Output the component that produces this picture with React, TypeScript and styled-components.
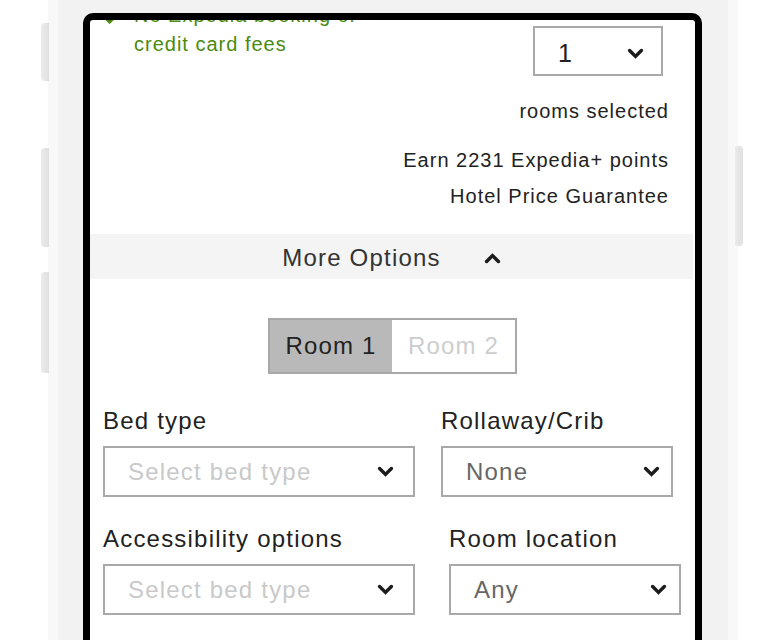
import React from "react";
import styled, { createGlobalStyle } from "styled-components";

const GlobalStyle = createGlobalStyle`
  html, body { margin: 0; padding: 0; background: #ffffff; }
  body { font-family: "Liberation Sans", Arial, Helvetica, sans-serif; }
  #root { height: 640px; overflow: hidden; }
`;

const Page = styled.div`
  height: 640px;
  padding-left: 48px;
  overflow: hidden;
`;

const PhoneBody = styled.div`
  position: relative;
  width: 690px;
  height: 640px;
  box-sizing: border-box;
  padding: 13px 36px 0 35px;
  background: linear-gradient(
    to right,
    #f8f8f8 0,
    #f8f8f8 10px,
    #f2f2f2 10px,
    #f2f2f2 calc(100% - 10px),
    #f8f8f8 calc(100% - 10px)
  );
`;

const SideButton = styled.div<{ $side: "left" | "right"; $top: number; $height: number }>`
  position: absolute;
  top: ${(p) => p.$top}px;
  ${(p) => (p.$side === "left" ? "left: -7px;" : "right: -5px;")}
  width: 8px;
  height: ${(p) => p.$height}px;
  border-radius: ${(p) => (p.$side === "left" ? "4px 0 0 4px" : "0 4px 4px 0")};
  background: linear-gradient(to right, #ebebeb, #e0e0e0);
`;

const Screen = styled.div`
  border: 7px solid #000;
  border-bottom: none;
  border-radius: 10px 10px 0 0;
  background: #fff;
  height: 700px;
  overflow: hidden;
`;

const ScreenContent = styled.div`
  margin-top: -20px;
  color: #222;
`;

const Summary = styled.div`
  display: flex;
  justify-content: space-between;
  align-items: flex-start;
`;

const Benefits = styled.ul`
  list-style: none;
  margin: 1px 0 0;
  padding: 0 0 0 14px;
`;

const Benefit = styled.li`
  display: flex;
  align-items: flex-start;
  gap: 14px;
  color: #4c8a0f;
  font-size: 20px;
  letter-spacing: 1px;
  line-height: 29px;
`;

const BenefitText = styled.span`
  max-width: 250px;
`;

const CheckSvg = styled.svg`
  width: 16px;
  height: 12px;
  margin-top: 11px;
  flex-shrink: 0;
`;

const Booking = styled.div`
  display: flex;
  flex-direction: column;
  align-items: flex-end;
  padding: 26px 26px 20px 0;
`;

const SmallText = styled.div<{ $top?: number }>`
  font-size: 20px;
  letter-spacing: 1px;
  line-height: 36px;
  color: #222;
  margin-top: ${(p) => p.$top ?? 0}px;
`;

const Perks = styled.div`
  margin-top: 13px;
  display: flex;
  flex-direction: column;
  align-items: flex-end;
`;

const SelectBox = styled.div<{
  $width: number;
  $height?: number;
  $chevronRight: number;
  $tone: "placeholder" | "value" | "strong";
  $offsetY?: number;
  $mr?: number;
}>`
  box-sizing: border-box;
  width: ${(p) => p.$width}px;
  height: ${(p) => p.$height ?? 51}px;
  margin-right: ${(p) => p.$mr ?? 0}px;
  border: 2px solid #a9a9a9;
  background: #fff;
  display: flex;
  align-items: center;
  justify-content: space-between;
  padding: ${(p) => p.$offsetY ?? 0}px ${(p) => p.$chevronRight - 2}px 0 23px;
  font-size: ${(p) => (p.$tone === "strong" ? 25 : 24)}px;
  letter-spacing: 1.2px;
  color: ${(p) =>
    p.$tone === "placeholder" ? "#c9c9c9" : p.$tone === "strong" ? "#222" : "#666"};
`;

const ChevronSvg = styled.svg`
  width: 17px;
  height: 11px;
  flex-shrink: 0;
  color: #1c1c1c;
`;

const ChevronDown = () => (
  <ChevronSvg viewBox="0 0 17 11">
    <path
      d="M2.6 2.6 L8.5 8.4 L14.4 2.6"
      fill="none"
      stroke="currentColor"
      strokeWidth="3.5"
      strokeLinecap="round"
      strokeLinejoin="miter"
    />
  </ChevronSvg>
);

const ChevronUp = () => (
  <ChevronSvg viewBox="0 0 17 11">
    <path
      d="M2.6 8.4 L8.5 2.6 L14.4 8.4"
      fill="none"
      stroke="currentColor"
      strokeWidth="3.5"
      strokeLinecap="round"
      strokeLinejoin="miter"
    />
  </ChevronSvg>
);

const MoreOptionsBar = styled.button`
  display: flex;
  align-items: center;
  justify-content: center;
  gap: 43px;
  box-sizing: border-box;
  width: calc(100% - 2px);
  height: 45px;
  padding: 3px 0 0;
  margin: 0;
  border: 0;
  background: #f4f4f4;
  font: inherit;
  font-size: 24px;
  letter-spacing: 1.2px;
  color: #333;
  cursor: pointer;
`;

const ToggleRow = styled.div`
  display: flex;
  justify-content: center;
  margin-top: 39px;
`;

const Toggle = styled.div`
  display: flex;
  border: 2px solid #a8a8a8;
`;

const ToggleOption = styled.button<{ $active: boolean; $width: number }>`
  width: ${(p) => p.$width}px;
  height: 52px;
  margin: 0;
  padding: 0;
  border: 0;
  font: inherit;
  font-size: 24px;
  letter-spacing: 1.2px;
  background: ${(p) => (p.$active ? "#b9b9b9" : "#fff")};
  color: ${(p) => (p.$active ? "#222" : "#cdcdcd")};
`;

const Form = styled.div`
  padding: 0 0 40px 13px;
`;

const FormRow = styled.div<{ $gap: number; $top: number }>`
  display: flex;
  gap: ${(p) => p.$gap}px;
  margin-top: ${(p) => p.$top}px;
`;

const Field = styled.div<{ $width: number }>`
  width: ${(p) => p.$width}px;
  display: flex;
  flex-direction: column;
  gap: 10px;
`;

const FieldLabel = styled.label`
  font-size: 24px;
  letter-spacing: 1.2px;
  line-height: 30px;
  color: #222;
  white-space: nowrap;
`;

type FieldProps = {
  label: string;
  value: string;
  placeholder?: boolean;
  width: number;
  chevronRight: number;
};

const SelectField = ({ label, value, placeholder, width, chevronRight }: FieldProps) => (
  <Field $width={width}>
    <FieldLabel>{label}</FieldLabel>
    <SelectBox $width={width} $chevronRight={chevronRight} $tone={placeholder ? "placeholder" : "value"}>
      <span>{value}</span>
      <ChevronDown />
    </SelectBox>
  </Field>
);

export default function App() {
  return (
    <>
      <GlobalStyle />
      <Page>
        <PhoneBody>
          <SideButton $side="left" $top={23} $height={58} />
          <SideButton $side="left" $top={148} $height={99} />
          <SideButton $side="left" $top={272} $height={101} />
          <SideButton $side="right" $top={146} $height={100} />
          <Screen>
            <ScreenContent>
              <Summary>
                <Benefits>
                  <Benefit>
                    <CheckSvg viewBox="0 0 16 12">
                      <path
                        d="M1.8 6.2 L5.6 10 L14.2 1.6"
                        fill="none"
                        stroke="currentColor"
                        strokeWidth="3"
                        strokeLinecap="butt"
                      />
                    </CheckSvg>
                    <BenefitText>No Expedia booking or credit card fees</BenefitText>
                  </Benefit>
                </Benefits>
                <Booking>
                  <SelectBox
                    $width={130}
                    $height={50}
                    $chevronRight={19}
                    $tone="strong"
                    $offsetY={5}
                    $mr={6}
                  >
                    <span>1</span>
                    <ChevronDown />
                  </SelectBox>
                  <SmallText $top={17}>rooms selected</SmallText>
                  <Perks>
                    <SmallText>Earn 2231 Expedia+ points</SmallText>
                    <SmallText>Hotel Price Guarantee</SmallText>
                  </Perks>
                </Booking>
              </Summary>

              <MoreOptionsBar>
                <span>More Options</span>
                <ChevronUp />
              </MoreOptionsBar>

              <ToggleRow>
                <Toggle>
                  <ToggleOption $active $width={122}>Room 1</ToggleOption>
                  <ToggleOption $active={false} $width={123}>Room 2</ToggleOption>
                </Toggle>
              </ToggleRow>

              <Form>
                <FormRow $gap={26} $top={32}>
                  <SelectField label="Bed type" value="Select bed type" placeholder width={312} chevronRight={21} />
                  <SelectField label="Rollaway/Crib" value="None" width={232} chevronRight={13} />
                </FormRow>
                <FormRow $gap={34} $top={27}>
                  <SelectField
                    label="Accessibility options"
                    value="Select bed type"
                    placeholder
                    width={312}
                    chevronRight={21}
                  />
                  <SelectField label="Room location" value="Any" width={232} chevronRight={14} />
                </FormRow>
              </Form>
            </ScreenContent>
          </Screen>
        </PhoneBody>
      </Page>
    </>
  );
}
